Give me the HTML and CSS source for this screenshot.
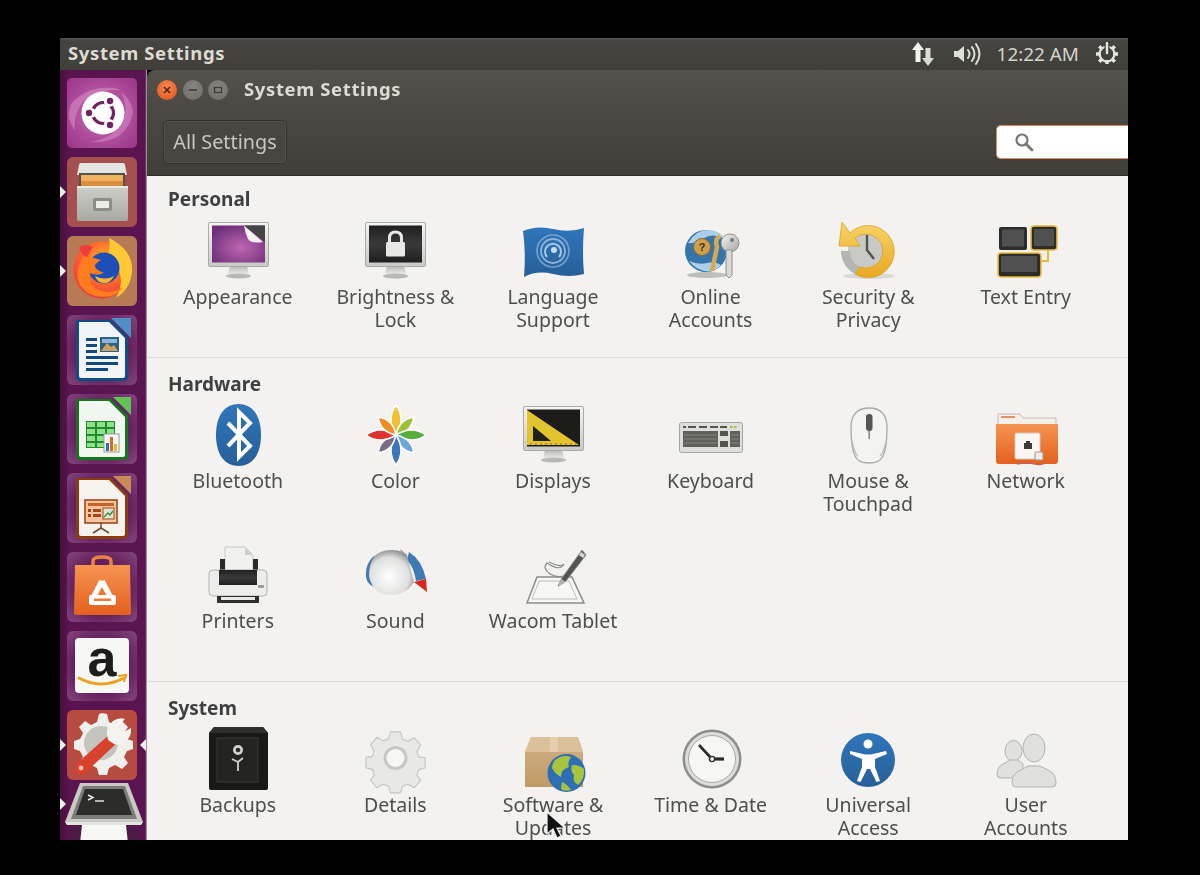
FILE: index.html
```html
<!DOCTYPE html>
<html lang="en">
<head>
<meta charset="utf-8">
<title>System Settings</title>
<link rel="stylesheet" href="styles.css">
</head>
<body>
<svg class="defs" aria-hidden="true">
  <defs>
    <linearGradient id="g-bezel" x1="0" y1="0" x2="0" y2="1"><stop offset="0" stop-color="#f4f4f2"/><stop offset="1" stop-color="#c9c9c6"/></linearGradient>
    <linearGradient id="g-stand" x1="0" y1="0" x2="0" y2="1"><stop offset="0" stop-color="#b5b5b2"/><stop offset="1" stop-color="#e9e9e7"/></linearGradient>
    <radialGradient id="g-purple" cx=".55" cy=".6" r=".65"><stop offset="0" stop-color="#c066b4"/><stop offset="1" stop-color="#6d2f78"/></radialGradient>
    <linearGradient id="g-dark" x1="0" y1="0" x2="0" y2="1"><stop offset="0" stop-color="#1f1f1f"/><stop offset=".5" stop-color="#3a3a3a"/><stop offset="1" stop-color="#1e1e1e"/></linearGradient>
    <linearGradient id="g-blue" x1="0" y1="0" x2="0" y2="1"><stop offset="0" stop-color="#2f76bb"/><stop offset="1" stop-color="#275f98"/></linearGradient>
    <linearGradient id="g-yellow" x1="0" y1="0" x2="0" y2="1"><stop offset="0" stop-color="#f8d468"/><stop offset="1" stop-color="#e9a823"/></linearGradient>
    <linearGradient id="g-silver" x1="0" y1="0" x2="1" y2="1"><stop offset="0" stop-color="#f5f5f3"/><stop offset="1" stop-color="#a5a5a2"/></linearGradient>
    <linearGradient id="g-orange" x1="0" y1="0" x2="0" y2="1"><stop offset="0" stop-color="#f59450"/><stop offset="1" stop-color="#e4601e"/></linearGradient>
    <radialGradient id="g-knob" cx=".45" cy=".6" r=".62"><stop offset="0" stop-color="#ffffff"/><stop offset=".7" stop-color="#e0e0de"/><stop offset="1" stop-color="#8a8a8c"/></radialGradient>
    <radialGradient id="g-tile-u" cx=".5" cy=".5" r=".7"><stop offset="0" stop-color="#c76cb2"/><stop offset="1" stop-color="#9b3489"/></radialGradient>
    <linearGradient id="g-box" x1="0" y1="0" x2="0" y2="1"><stop offset="0" stop-color="#d2b184"/><stop offset="1" stop-color="#bf9a68"/></linearGradient>
    <radialGradient id="g-ff" cx=".55" cy=".35" r=".75"><stop offset="0" stop-color="#ffb52e"/><stop offset=".5" stop-color="#ff6a2a"/><stop offset="1" stop-color="#e8284c"/></radialGradient>
    <linearGradient id="g-cab" x1="0" y1="0" x2="0" y2="1"><stop offset="0" stop-color="#cfcfc9"/><stop offset="1" stop-color="#a9a9a3"/></linearGradient>
    <symbol id="monitor" viewBox="0 0 64 64">
      <path d="M24 47h17l2 8H22z" fill="url(#g-stand)"/>
      <ellipse cx="32.5" cy="57" rx="12.5" ry="2.6" fill="#b8b8b5"/>
      <rect x="2.5" y="3.5" width="60" height="44" rx="1.5" fill="url(#g-bezel)" stroke="#a9a9a6"/>
    </symbol>
  </defs>
</svg>
<div class="screen">
  <header class="panel">
    <span class="panel-title">System Settings</span>
    <div class="indicators">
      <svg class="ind ind-net" viewBox="0 0 24 24"><path d="M7 0l6 8H9.500v12h-5V8H1z" fill="#f2f2ee"/><path d="M17 24l6-8h-3.500V6h-5v10H11z" fill="#dcdcd7"/></svg>
      <svg class="ind ind-vol" viewBox="0 0 28 24"><path d="M1 9h4l6-5v16l-6-5H1z" fill="#dfdfda"/><path d="M15 8q3 4 0 8M19 5q5 7 0 14M23 2q7 10 0 20" fill="none" stroke="#dfdfda" stroke-width="2" stroke-linecap="round"/></svg>
      <span class="clock">12:22 AM</span>
      <svg class="ind ind-power" viewBox="0 0 24 24"><g stroke="#e6e6e0" stroke-width="3.400"><path d="M12 2v4M12 18v4M1 12h5M18 12h5M4.200 4.200l3 3M16.800 16.800l3 3M4.200 19.800l3-3M19.800 4.200l-3 3"/></g><circle cx="12" cy="12" r="7.500" fill="none" stroke="#e6e6e0" stroke-width="2.200"/><path d="M12 0v11" stroke="#40403b" stroke-width="5"/><path d="M12 1v10" stroke="#e6e6e0" stroke-width="2.400" stroke-linecap="round"/></svg>
    </div>
  </header>
  <div class="desktop">
    <nav class="launcher">
      <div class="tile tile-ubuntu">
        <svg viewBox="0 0 70 70"><rect width="70" height="70" rx="5" fill="url(#g-tile-u)"/><path d="M4 26Q24 4 56 12 36 10 18 22 6 34 8 52 -2 40 4 26z" fill="#d68cc6" opacity=".6"/><path d="M64 42Q54 66 24 64 46 60 56 44 62 30 54 14 70 26 64 42z" fill="#d68cc6" opacity=".55"/><circle cx="36" cy="35" r="21.500" fill="#fff"/><circle cx="36" cy="35" r="10.500" fill="none" stroke="#6f2360" stroke-width="3.200"/><circle cx="42" cy="24" r="5" fill="#fff"/><circle cx="42" cy="46" r="5" fill="#fff"/><circle cx="24" cy="35" r="5" fill="#fff"/><circle cx="43" cy="23" r="3.200" fill="#6f2360"/><circle cx="43" cy="47" r="3.200" fill="#6f2360"/><circle cx="22" cy="35" r="3.200" fill="#6f2360"/></svg>
      </div>
      <div class="tile tile-red has-pip">
        <svg viewBox="0 0 70 70"><path d="M12 8q0-2 2-2h42q2 0 2 2l2 10H10z" fill="#e4e4e0"/><rect x="12" y="16" width="46" height="13" fill="#55514a"/><rect x="14" y="18" width="42" height="6" fill="#efb25e"/><rect x="14" y="24" width="42" height="5" fill="#d98f3d"/><path d="M10 29h51v33q0 2-2 2H12q-2 0-2-2z" fill="url(#g-cab)"/><path d="M10 29h51v2H10z" fill="#e9e9e4"/><rect x="26" y="41" width="19" height="13" rx="2" fill="#8d8d88"/><rect x="29" y="44" width="13" height="7" fill="#ecece8"/></svg>
      </div>
      <div class="tile tile-tan has-pip">
        <svg viewBox="0 0 70 70"><circle cx="35" cy="34" r="28.500" fill="url(#g-ff)"/><path d="M42 2q24 12 23 33-1 18-16 27 8-14 3-27-3-10-12-15 4-8 2-18z" fill="#ffc933"/><circle cx="37" cy="32" r="15.500" fill="#1c4fb8"/><path d="M19 19q-12 14-7 28 6 13 24 14 14 0 20-10-12 8-24 3-12-5-9-17 6 3 14 0-10-4-9-8 3-4 6-5-8-2-15-5z" fill="#ff7d1f"/><path d="M28 40q10 5 19 0-4 8-11 7-6-1-8-7z" fill="#ffb52e"/><path d="M12 11q2 8 8 10l6-10q-8-4-14 0z" fill="#f23c3c"/></svg>
      </div>
      <div class="tile">
        <svg viewBox="0 0 70 70"><path d="M9 5h35l17 17v40q0 4-4 4H13q-4 0-4-4z" fill="#0f4d85"/><path d="M12 7h30l16 16v38q0 2-2 2H14q-2 0-2-2z" fill="#f2f4f5"/><path d="M44 3l20 20V3z" fill="#4a9bd0" opacity=".9"/><g fill="#114a7e"><rect x="19" y="23" width="11" height="3"/><rect x="19" y="29" width="11" height="3"/><rect x="19" y="35" width="11" height="3"/><rect x="19" y="41" width="32" height="3"/><rect x="19" y="47" width="32" height="3"/><rect x="19" y="53" width="22" height="3"/></g><rect x="33" y="22" width="19" height="15" fill="#2c5f8a"/><path d="M34 36l6-8 4 4 3-2 4 6z" fill="#c9a35a"/><rect x="35" y="24" width="15" height="4" fill="#8cb6d6"/></svg>
      </div>
      <div class="tile">
        <svg viewBox="0 0 70 70"><path d="M9 5h35l17 17v40q0 4-4 4H13q-4 0-4-4z" fill="#16761d"/><path d="M12 7h30l16 16v38q0 2-2 2H14q-2 0-2-2z" fill="#f2f5f0"/><path d="M46 3l18 18V3z" fill="#62c255"/><rect x="19" y="27" width="29" height="27" fill="#1f8d2c"/><g fill="#8ee08a"><rect x="20" y="28" width="8" height="5"/><rect x="30" y="28" width="8" height="5"/><rect x="40" y="28" width="7" height="5"/><rect x="20" y="35" width="8" height="5"/><rect x="30" y="35" width="8" height="5"/><rect x="40" y="35" width="7" height="5"/><rect x="20" y="42" width="8" height="5"/><rect x="30" y="42" width="8" height="5"/><rect x="20" y="49" width="8" height="4"/><rect x="30" y="49" width="8" height="4"/></g><rect x="37" y="40" width="15" height="18" fill="#f8f8f6" stroke="#9a9a96"/><rect x="39" y="49" width="3" height="8" fill="#2a73b8"/><rect x="43" y="43" width="3" height="14" fill="#e0662a"/><rect x="47" y="50" width="3" height="7" fill="#e8b92e"/></svg>
      </div>
      <div class="tile">
        <svg viewBox="0 0 70 70"><path d="M9 5h35l17 17v40q0 4-4 4H13q-4 0-4-4z" fill="#8b3d10"/><path d="M12 7h30l16 16v38q0 2-2 2H14q-2 0-2-2z" fill="#f6f2ee"/><path d="M46 3l18 18V3z" fill="#c98a55"/><rect x="18" y="27" width="32" height="23" fill="#f3c6a0" stroke="#a2481a" stroke-width="1.6"/><rect x="21" y="30" width="26" height="3" fill="#c9632a"/><g fill="#a2481a"><rect x="21" y="36" width="3" height="3"/><rect x="21" y="41" width="3" height="3"/><rect x="26" y="36" width="8" height="3"/><rect x="26" y="41" width="8" height="3"/></g><rect x="36" y="35" width="11" height="11" fill="#d8e6d4" stroke="#a2481a"/><path d="M37 44l4-4 2 2 3-4" stroke="#3f8a3a" stroke-width="1.4" fill="none"/><path d="M34 50v5m0 0l-8 5m8-5l8 5" stroke="#6b4a30" stroke-width="1.5" fill="none"/></svg>
      </div>
      <div class="tile">
        <svg viewBox="0 0 70 70"><path d="M26 14V9q0-4 9-4t9 4v5" fill="none" stroke="#e8843f" stroke-width="3.500"/><path d="M8 13h55l1 48q0 2-2 2H9q-2 0-2-2z" fill="url(#g-orange)"/><path d="M35 29L26 46M35 29l9 17" stroke="#fff" stroke-width="5.500" fill="none"/><rect x="22" y="43" width="27" height="10" rx="2" fill="#fff"/><rect x="27" y="46.500" width="17" height="2.500" fill="#ef7d3a"/></svg>
      </div>
      <div class="tile">
        <svg viewBox="0 0 70 70"><rect x="8" y="7" width="54" height="55" rx="4" fill="#f7f7f5"/><text class="amazon-a" x="35" y="45" text-anchor="middle">a</text><path d="M12 47q22 12 45 0" fill="none" stroke="#f0a020" stroke-width="3" stroke-linecap="round"/><path d="M51 45l8-1-2 7" fill="none" stroke="#f0a020" stroke-width="2.200"/></svg>
      </div>
      <div class="tile tile-brick has-pip has-pip-right">
        <svg viewBox="0 0 70 70"><path d="M35 3l5 1 2 8 6 3 7-4 6 6-4 6 3 6 6 2v8l-6 2-3 6 4 6-6 6-7-4-6 3-2 7h-8l-2-7-6-3-6 4-6-6 4-6-3-6-6-2v-8l6-2 3-6-4-6 6-6 6 4 6-3 2-8z" fill="#efefec"/><circle cx="34" cy="33" r="17" fill="#c4c4bf"/><path d="M8 55L43 24l8 8-33 31q-5 3-8 0t-2-8z" fill="#d8412c"/><path d="M41 30q-4-12 5-19 6-4 12-2l-7 8 4 6 9-5q1 9-6 14-6 4-11 2z" fill="#f3f3f0"/><circle cx="14" cy="58" r="2.400" fill="#f3c0b5"/></svg>
      </div>
      <div class="tile tile-term has-pip">
        <svg viewBox="0 0 84 60"><path d="M18 1h48l15 39H3z" fill="#c9c9c6"/><path d="M21 4h42l12 33H9z" fill="#7c7c78"/><path d="M23 7h38l9 26H14z" fill="#2c2c2a"/><path d="M26 13l5 2.500-5 2.500" fill="none" stroke="#eee" stroke-width="1.400"/><path d="M33 19h9" stroke="#eee" stroke-width="1.400"/><path d="M3 40h78l-2 3H5z" fill="#e4e4e0"/><path d="M10 43h64l4 18H6z" fill="#4e1a48"/><path d="M20 43h44l2 18H18z" fill="#f7f7f5"/></svg>
      </div>
    </nav>
    <main class="window">
      <div class="titlebar">
        <div class="controls">
          <span class="ctl ctl-close"><svg viewBox="0 0 10 10"><path d="M2 2l6 6M8 2l-6 6" stroke="#4a2413" stroke-width="1.500"/></svg></span>
          <span class="ctl"><svg viewBox="0 0 10 10"><path d="M1 5h8" stroke="#3d3c38" stroke-width="1.600"/></svg></span>
          <span class="ctl"><svg viewBox="0 0 10 10"><rect x="1.500" y="2.500" width="7" height="5" fill="none" stroke="#3d3c38" stroke-width="1.300"/></svg></span>
        </div>
        <span class="window-title">System Settings</span>
      </div>
      <div class="toolbar">
        <button class="all-settings">All Settings</button>
        <div class="search"><svg viewBox="0 0 20 20"><circle cx="8" cy="8" r="5.500" fill="none" stroke="#77766f" stroke-width="2.200"/><path d="M12 12l6 6" stroke="#77766f" stroke-width="2.800" stroke-linecap="round"/></svg></div>
      </div>
      <div class="content">
        <section class="group group-first">
          <h2>Personal</h2>
          <div class="grid">
            <div class="item"><svg class="icon" viewBox="0 0 64 64"><use href="#monitor"/><rect x="6" y="6.500" width="53" height="37" fill="url(#g-purple)"/><path d="M38 6.500h21V23z" fill="#444"/><path d="M38 6.500L57 23q-12 2-15-3-3-6-4-13.500z" fill="#f5f2f4"/></svg><span>Appearance</span></div>
            <div class="item"><svg class="icon" viewBox="0 0 64 64"><use href="#monitor"/><rect x="6" y="6.500" width="53" height="37" fill="url(#g-dark)"/><path d="M26.500 23v-4q0-6 6-6t6 6v4" fill="none" stroke="#e8e8e6" stroke-width="3"/><rect x="23" y="23" width="19" height="14.500" rx="1.500" fill="#e8e8e6"/></svg><span>Brightness &amp; Lock</span></div>
            <div class="item"><svg class="icon" viewBox="0 0 64 64"><path d="M2 12q14-6 30-2t31-1q-2 24 0 46-15 4-31 0T3 58Q5 34 2 12z" fill="url(#g-blue)"/><g fill="none" stroke="#a8c7e4"><circle cx="32" cy="32" r="16" stroke-width="1.600" opacity=".6"/><circle cx="32" cy="32" r="12" stroke-width="1.800" opacity=".8"/><path d="M26 38a8 8 0 1 1 12 0" stroke-width="2"/></g><circle cx="33" cy="31" r="3" fill="#c8dcef"/></svg><span>Language Support</span></div>
            <div class="item"><svg class="icon" viewBox="0 0 64 64"><ellipse cx="28" cy="56" rx="20" ry="3" fill="#9b9b98" opacity=".6"/><circle cx="27" cy="32" r="21" fill="#3574ad"/><path d="M9 24q8-14 22-13 10 1 14 8-12-5-20 0-8 6-16 5zM10 42q10 4 18 2 8-2 14 2-8 8-16 6-10-2-16-10z" fill="#a9cfe9"/><circle cx="23" cy="28" r="8.500" fill="#cf9f4e" stroke="#8d6a2b"/><text class="keyhole" x="23" y="32" text-anchor="middle">?</text><path d="M33 52l5-24q-3-8 3-11" fill="none" stroke="#d7aa51" stroke-width="4.500"/><circle cx="51" cy="24" r="9" fill="url(#g-silver)" stroke="#8e8e8b"/><path d="M47 31h6v25l-3 3-3-3z" fill="#d9d9d6" stroke="#8e8e8b"/><circle cx="53" cy="21" r="2" fill="#77777a"/></svg><span>Online Accounts</span></div>
            <div class="item"><svg class="icon" viewBox="0 0 64 64"><ellipse cx="33" cy="57" rx="26" ry="3" fill="#bdbdb9" opacity=".5"/><circle cx="31" cy="31" r="19" fill="#c9c9c7"/><path d="M5 32a26 26 0 0 0 14 23l5-7a17 17 0 0 1-10-16z" fill="#b5b5b2"/><path d="M14 14A26 26 0 1 1 19 55l5-7a17 17 0 1 0-5-29l5 8H3l3-24z" fill="url(#g-yellow)" stroke="#dc9f1d" stroke-width=".8"/><path d="M31 16v15l7 9" fill="none" stroke="#54544f" stroke-width="2.400"/></svg><span>Security &amp; Privacy</span></div>
            <div class="item"><svg class="icon" viewBox="0 0 64 64"><path d="M54 30v12H46" fill="none" stroke="#e9b93c" stroke-width="2"/><rect x="5" y="8" width="28" height="23" rx="2" fill="#2c2c2b"/><rect x="8" y="10.500" width="22" height="17" fill="#505050"/><rect x="37" y="7" width="26" height="24" rx="3" fill="#2c2c2b" stroke="#edbc3d" stroke-width="1.600"/><rect x="40" y="10" width="20" height="17" fill="#505050"/><rect x="4" y="34" width="43" height="24" rx="3" fill="#2c2c2b" stroke="#edbc3d" stroke-width="1.600"/><rect x="7" y="37" width="36" height="16" fill="#505050"/></svg><span>Text Entry</span></div>
          </div>
        </section>
        <section class="group">
          <h2>Hardware</h2>
          <div class="grid">
            <div class="item"><svg class="icon" viewBox="0 0 64 64"><path d="M32.500 1C46 1 55 12 55 32S46 63 32.500 63 10 52 10 32 19 1 32.500 1z" fill="url(#g-blue)"/><path d="M22 20l22 23-11 11V9l11 11-22 23" fill="none" stroke="#fff" stroke-width="4"/></svg><span>Bluetooth</span></div>
            <div class="item"><svg class="icon" viewBox="0 0 64 64"><g stroke="#fff" stroke-width="1.500"><path d="M33 32Q23 16 33 2 43 16 33 32z" fill="#f2c130"/><path d="M33 32Q24 18 33 7 42 18 33 32z" fill="#9dc13a" transform="rotate(45 33 32)"/><path d="M33 32Q23 16 33 2 43 16 33 32z" fill="#58ad3d" transform="rotate(90 33 32)"/><path d="M33 32Q24 18 33 7 42 18 33 32z" fill="#6ea6d8" transform="rotate(135 33 32)"/><path d="M33 32Q23 16 33 2 43 16 33 32z" fill="#3a76b8" transform="rotate(180 33 32)"/><path d="M33 32Q24 18 33 7 42 18 33 32z" fill="#7a6a88" transform="rotate(225 33 32)"/><path d="M33 32Q23 16 33 2 43 16 33 32z" fill="#e0322e" transform="rotate(270 33 32)"/><path d="M33 32Q24 18 33 7 42 18 33 32z" fill="#f08c24" transform="rotate(315 33 32)"/></g></svg><span>Color</span></div>
            <div class="item"><svg class="icon" viewBox="0 0 64 64"><use href="#monitor"/><rect x="6" y="6.500" width="53" height="37" fill="#1c1c1a"/><path d="M6 7l52 35H6z" fill="#e3c42e"/><path d="M12 23l18 15H12z" fill="#1f1f1c"/><path d="M9 41h46" stroke="#8a7718" stroke-width="1" stroke-dasharray="2 3"/></svg><span>Displays</span></div>
            <div class="item"><svg class="icon" viewBox="0 0 64 64"><rect x=".5" y="19.500" width="63" height="30" rx="2" fill="#dededb" stroke="#a5a5a2"/><g fill="#55554f"><rect x="4" y="23" width="3" height="2"/><rect x="9" y="23" width="8" height="2"/><rect x="20" y="23" width="8" height="2"/><rect x="31" y="23" width="8" height="2"/><rect x="41" y="23" width="7" height="2"/><rect x="4" y="28" width="35" height="16" fill="#61615c"/><rect x="41" y="28" width="8" height="5"/><rect x="41" y="38" width="8" height="6"/><rect x="51" y="28" width="10" height="16" fill="#61615c"/></g><path d="M5 32h33M5 36h33M5 40h33M52 32h8M52 36h8M52 40h8" stroke="#94948e" stroke-width=".7"/><rect x="51" y="23" width="2.500" height="2" fill="#9bc13a"/><rect x="55" y="23" width="2.500" height="2" fill="#9bc13a"/></svg><span>Keyboard</span></div>
            <div class="item"><svg class="icon" viewBox="0 0 64 64"><path d="M33 5q18 0 18 20 0 20-4 28-3 7-14 7t-14-7q-4-8-4-28Q15 5 33 5z" fill="#f3f3f1" stroke="#a9a9a6" stroke-width="1.300"/><path d="M16 38q2 12 6 15M50 38q-2 12-6 15" fill="none" stroke="#bdbdba" stroke-width="1.500"/><rect x="30" y="11" width="6.500" height="17" rx="3.200" fill="#555552"/><path d="M33.200 28v8" stroke="#77776f" stroke-width="1.300"/></svg><span>Mouse &amp; Touchpad</span></div>
            <div class="item"><svg class="icon" viewBox="0 0 64 64"><path d="M4 11h22l3 4h33v14H4z" fill="#f4efe8" stroke="#c9bcae"/><rect x="7" y="13" width="14" height="2" fill="#e29066"/><path d="M2 21h62v37q0 3-3 3H5q-3 0-3-3z" fill="url(#g-orange)"/><rect x="21" y="30" width="25" height="26" rx="1.500" fill="#f8f6f2" stroke="#d7c9ba"/><path d="M30 40h2v-2h4v2h2v6h-8z" fill="#3a3a37"/><rect x="41" y="49" width="8" height="8" rx="1" fill="#ececea" stroke="#9a9a96"/><path d="M23 61q10-2 18 0t10-2" fill="none" stroke="#c9605c" stroke-width="1.400"/></svg><span>Network</span></div>
            <div class="item"><svg class="icon" viewBox="0 0 64 64"><path d="M19 4h20l8 8v22H19z" fill="#f1f1ef" stroke="#c9c9c6"/><path d="M39 4l8 8h-8z" fill="#cfcfcc"/><path d="M14 16h5v22h-5zM47 16h5v22h-5z" fill="#2a2a28"/><rect x="3" y="27" width="58" height="26" rx="4" fill="#ededeb" stroke="#b0b0ad"/><rect x="13" y="27" width="38" height="15" fill="url(#g-dark)"/><path d="M11 53h42v6q0 1-1 1H12q-1 0-1-1z" fill="#2e2e2c"/><rect x="15" y="54" width="34" height="3" fill="#e9e9e7"/><rect x="52" y="42" width="6" height="3" rx="1" fill="#9a9a96"/></svg><span>Printers</span></div>
            <div class="item"><svg class="icon" viewBox="0 0 64 64"><path d="M3 34q-1-14 9-22-4 10-4 22 0 6 3 10-7-3-8-10z" fill="#3f7ab5"/><path d="M46 9q13 8 17 27l-10 2q-2-14-9-21z" fill="#3f7ab5"/><path d="M51 39l12-3 1 13z" fill="#d9261f"/><path d="M6 33Q6 7 28 7q10 0 16 5l7 27q-8 13-23 13Q10 52 6 33z" fill="url(#g-knob)"/><path d="M37 6l7 6-5 1z" fill="#9a9a97"/></svg><span>Sound</span></div>
            <div class="item"><svg class="icon" viewBox="0 0 64 64"><path d="M16 34h35l12 26H6z" fill="#f7f7f5" stroke="#8c8c88" stroke-width="1.500"/><path d="M18 38h30l8 18H11z" fill="none" stroke="#bcbcb8"/><path d="M28 19q12 6 15 2-4 8-17-1-5 5 3 11 8 4 13 2" fill="none" stroke="#8a8a86" stroke-width="1.200"/><path d="M61 7l-20 28-4 8 8-5 20-26z" fill="#55554f" stroke="#8c8c88"/><path d="M60 9l4 3-2 3-4-3z" fill="#d9d9d6"/><path d="M40 36l5 3-8 5z" fill="#b5b5b1"/></svg><span>Wacom Tablet</span></div>
          </div>
        </section>
        <section class="group group-last">
          <h2>System</h2>
          <div class="grid">
            <div class="item"><svg class="icon" viewBox="0 0 64 64"><path d="M8 0h49l5 6v55q0 2-2 2H5q-2 0-2-2V6z" fill="#191918"/><path d="M8 0h49l5 6H3z" fill="#2e2e2c"/><rect x="11" y="11" width="41" height="44" fill="#232322" stroke="#3b3b39"/><circle cx="32" cy="23" r="5" fill="#d1d1ce"/><circle cx="32" cy="23" r="2.300" fill="#2a2a28"/><path d="M32 35v9M32 35l-6-3M32 35l5-4" stroke="#d1d1ce" stroke-width="1.800"/></svg><span>Backups</span></div>
            <div class="item"><svg class="icon" viewBox="0 0 64 64"><path d="M27 2h11l2 8 6 2.500 7-4 7 8-4 7 2 6 7 1v11l-7 2-2 6 4 6-7 8-7-4-6 2.500-2 7H27l-2-7-6-2.500-7 4-7-8 4-6-2-6-7-2V30l7-1 2-6-4-7 7-8 7 4 6-2.500z" fill="#e8e8e6" stroke="#c6c6c3" stroke-width="1.300" transform="translate(3 3) scale(.91)"/><circle cx="32.500" cy="31" r="12" fill="#c7c7c4"/><circle cx="32.500" cy="31" r="9" fill="#f6f6f4"/></svg><span>Details</span></div>
            <div class="item"><svg class="icon" viewBox="0 0 64 64"><path d="M10 10h47l5 15v35H4V25z" fill="url(#g-box)"/><path d="M10 10h47l5 15H4z" fill="#dcc09a"/><path d="M29 10h8v15h-8z" fill="#e5cfae"/><circle cx="45.500" cy="46" r="19" fill="#2d6eb5"/><path d="M34 33q8-6 16-3-4 6-2 10-8 2-8 10-6-3-9-9 0-4 3-8zM51 38q8 0 12 4 1 10-6 16-6-3-4-10-4-4-2-10zM41 55q5 2 9 8-6 2-10-1z" fill="#a8c43c"/></svg><span>Software &amp; Updates</span></div>
            <div class="item"><svg class="icon" viewBox="0 0 64 64"><circle cx="33" cy="32" r="29.500" fill="#8d8d8a"/><circle cx="33" cy="32" r="27" fill="#dcdcd9"/><circle cx="33" cy="32" r="23.500" fill="#f6f6f4" stroke="#a8a8a5"/><path d="M33 32L20 18" stroke="#2a2a28" stroke-width="2.600"/><path d="M33 32h12" stroke="#2a2a28" stroke-width="3.200"/><circle cx="33" cy="32" r="2.600" fill="#f6f6f4" stroke="#2a2a28" stroke-width="1.400"/></svg><span>Time &amp; Date</span></div>
            <div class="item"><svg class="icon" viewBox="0 0 64 64"><circle cx="32" cy="33" r="27" fill="url(#g-blue)"/><circle cx="32" cy="17" r="4.500" fill="#fff"/><path d="M14 24l13 3q5 1 10 0l13-3 1 3-12 5v8l5 14-3.500 1-6.500-13h-3l-6.500 13-3.500-1 5-14v-8l-12-5z" fill="#fff"/></svg><span>Universal Access</span></div>
            <div class="item"><svg class="icon" viewBox="0 0 64 64"><g fill="#e0e0de" stroke="#b3b3b0"><ellipse cx="19.500" cy="24" rx="8.500" ry="10.500"/><path d="M3 47q0-8 8-11l5-3h8l5 4v14H6q-3 0-3-4z"/><ellipse cx="40" cy="21" rx="11" ry="14"/><path d="M18 56q0-10 9-13l7-4h12l8 4q8 3 8 13 0 4-4 4H22q-4 0-4-4z"/></g></svg><span>User Accounts</span></div>
          </div>
        </section>
      </div>
      <svg class="cursor" viewBox="0 0 20 28"><path d="M1 1v22l6-5 4 9 4-2-4-8h8z" fill="#111" stroke="#f4f4f4" stroke-width="1.200"/></svg>
    </main>
  </div>
</div>
</body>
</html>
```

FILE: styles.css
```css
* { box-sizing: border-box; }
html, body { margin: 0; height: 100%; }
body {
  background: #000;
  padding: 38px 72px 35px 60px;
  overflow: hidden;
  font-family: "Noto Sans", "Open Sans", sans-serif;
}
.defs { display: block; width: 0; height: 0; }
.screen {
  height: 802px;
  display: flex;
  flex-direction: column;
  overflow: hidden;
  filter: blur(0.45px);
}
.panel {
  height: 32px;
  flex: none;
  display: flex;
  align-items: center;
  justify-content: space-between;
  padding-left: 8px;
  background: linear-gradient(#55534e, #454440 10%, #403f3a);
  color: #dfdbd2;
}
.panel-title { font-size: 18.5px; line-height: 30px; margin-bottom: 2px; font-weight: 700; letter-spacing: .62px; white-space: nowrap; }
.indicators { display: flex; align-items: center; padding-right: 9px; }
.ind { display: block; }
.ind-net { width: 24px; height: 24px; margin-right: 18px; }
.ind-vol { width: 28px; height: 24px; margin-right: 16px; }
.clock { font-size: 18.9px; color: #d4d4cc; margin-right: 16px; }
.ind-power { width: 24px; height: 24px; }

.desktop { flex: 1; min-height: 0; display: flex; }
.launcher {
  width: 87px;
  flex: none;
  padding: 8px 0 0 7px;
  display: flex;
  flex-direction: column;
  gap: 9px;
  background: linear-gradient(90deg, #47103f, #5a1551 12%, #5a1551 98%, #c9b8c6);
}
.tile {
  position: relative;
  width: 70px;
  height: 70px;
  flex: none;
  border-radius: 6px;
  background: radial-gradient(circle at 50% 50%, #64205c 55%, #84477e);
}
.tile svg { display: block; width: 70px; height: 70px; overflow: visible; }
.tile-ubuntu { background: #9b3489; }
.tile-red { background: #a5504f; }
.tile-tan { background: #b87a55; }
.tile-brick { background: #b84b3f; }
.tile-term { background: none; margin-top: -7px; }
.tile-term svg { width: 84px; height: 60px; margin-left: -5px; }
.has-pip::before, .has-pip-right::after {
  content: "";
  position: absolute;
  top: 50%;
  margin-top: -6px;
  border: 6px solid transparent;
}
.has-pip::before { left: -7px; border-left-color: #eee; border-right-width: 0; }
.has-pip-right::after { right: -9px; border-right-color: #eee; border-left-width: 0; }
.tile-term.has-pip::before { top: 22px; }
.amazon-a { font-family: "Liberation Sans", sans-serif; font-weight: 700; font-size: 52px; fill: #1d1d1b; }
.keyhole { font-family: "Liberation Sans", sans-serif; font-weight: 700; font-size: 11px; fill: #3a2a10; }

.window { position: relative; flex: 1; min-width: 0; display: flex; flex-direction: column; }
.titlebar {
  height: 39px;
  flex: none;
  display: flex;
  align-items: center;
  padding-left: 10px;
  border-radius: 8px 0 0 0;
  background: linear-gradient(#53524c, #4a4944);
}
.controls { display: flex; gap: 5.5px; margin-right: 16px; }
.ctl {
  width: 20px;
  height: 20px;
  border-radius: 50%;
  display: flex;
  align-items: center;
  justify-content: center;
  background: radial-gradient(circle at 50% 35%, #858480, #6d6c66);
}
.ctl svg { width: 10px; height: 10px; display: block; }
.ctl-close { background: radial-gradient(circle at 50% 35%, #f6854e, #e2541c); }
.window-title { font-size: 18.5px; line-height: 30px; margin-bottom: 2px; font-weight: 700; letter-spacing: .62px; color: #dfdbd2; white-space: nowrap; }
.toolbar {
  height: 67px;
  flex: none;
  display: flex;
  align-items: flex-start;
  justify-content: space-between;
  padding: 11px 0 0 16px;
  background: linear-gradient(#4a4944, #3f3e39);
  border-bottom: 1px solid #2d2c28;
}
.all-settings {
  width: 124px;
  height: 44px;
  padding: 0 0 2px;
  border: 1px solid #33322e;
  border-radius: 5px;
  background: #47463f;
  box-shadow: inset 0 0 0 1px #52514b;
  color: #c9c7bf;
  font: 19.8px "Noto Sans", sans-serif;
}
.search {
  width: 132px;
  height: 34px;
  margin-top: 5px;
  padding: 6px 0 0 17px;
  background: #fff;
  border: 1px solid #d98a5c;
  border-right: 0;
  border-radius: 5px 0 0 5px;
}
.search svg { display: block; width: 20px; height: 20px; }

.content { flex: 1; min-height: 0; overflow: hidden; background: #f3f2f1; }
.group { padding: 15px 0 25px 21px; border-bottom: 1px solid #dcdbd9; }
.group-first { padding-top: 12px; }
.group-last { border-bottom: 0; }
.group h2 {
  margin: 0 0 8px;
  height: 22px;
  font-size: 19px;
  line-height: 22px;
  font-weight: 700;
  color: #3f3f3f;
}
.group-first h2 { margin-bottom: 9px; }
.grid {
  margin-left: -9px;
  display: grid;
  grid-template-columns: repeat(6, 157.6px);
  row-gap: 27px;
}
.item {
  display: flex;
  flex-direction: column;
  align-items: center;
  min-height: 113px;
  text-align: center;
}
.icon { display: block; width: 64px; height: 64px; flex: none; overflow: visible; }
.item span {
  margin-top: 2px;
  max-width: 130px;
  font-size: 19.5px;
  line-height: 23px;
  color: #4e4e4c;
}
.cursor { position: absolute; left: 399px; top: 741px; width: 20px; height: 28px; }
```
